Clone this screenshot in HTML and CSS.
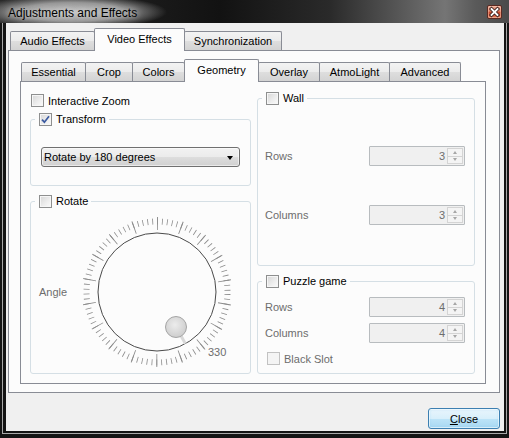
FILE: index.html
```html
<!DOCTYPE html>
<html>
<head>
<meta charset="utf-8">
<title>Adjustments and Effects</title>
<link rel="stylesheet" href="styles.css">
</head>
<body>
<div class="window">
  <div class="titlebar">
    <span class="title">Adjustments and Effects</span>
    <span class="close-x">
      <svg width="13" height="12" viewBox="0 0 13 12">
        <path d="M3.5 3 L9.5 9 M9.5 3 L3.5 9" stroke="#3a2320" stroke-width="3.6" stroke-linecap="square"/>
        <path d="M3.5 3 L9.5 9 M9.5 3 L3.5 9" stroke="#ffffff" stroke-width="1.8" stroke-linecap="square"/>
      </svg>
    </span>
  </div>
  <div class="frame">
    <div class="client">
      <div class="tabbar outer-tabs">
        <div class="tab t-audio">Audio Effects</div>
        <div class="tab sel t-video">Video Effects</div>
        <div class="tab t-sync">Synchronization</div>
      </div>
      <div class="pane outer-pane">
        <div class="tabbar inner-tabs">
          <div class="tab t-ess">Essential</div>
          <div class="tab t-crop">Crop</div>
          <div class="tab t-colors">Colors</div>
          <div class="tab sel t-geo">Geometry</div>
          <div class="tab t-over">Overlay</div>
          <div class="tab t-atmo">AtmoLight</div>
          <div class="tab t-adv">Advanced</div>
        </div>
        <div class="pane inner-pane">
          <div class="col col-left">
            <div class="check-row zoom-row"><span class="cb"></span><span>Interactive Zoom</span></div>
            <fieldset class="group transform">
              <legend><span class="leg"><span class="cb checked"><svg width="9" height="9" viewBox="0 0 9 9"><path d="M1 4.6 L3.4 7.2 L8 1.2" fill="none" stroke="#3b5aa0" stroke-width="1.7"/></svg></span><span>Transform</span></span></legend>
              <div class="group-body transform-body">
                <div class="combo"><span>Rotate by 180 degrees</span><span class="combo-arrow"></span></div>
              </div>
            </fieldset>
            <fieldset class="group rotate">
              <legend><span class="leg"><span class="cb"></span><span>Rotate</span></span></legend>
              <div class="group-body rotate-body">
                <span class="muted angle">Angle</span>
                <svg class="dial" width="160" height="160" viewBox="0 0 160 160">
                  <defs>
                    <radialGradient id="knob" cx="0.45" cy="0.4" r="0.65">
                      <stop offset="0" stop-color="#ececec"/>
                      <stop offset="1" stop-color="#cbcbcb"/>
                    </radialGradient>
                  </defs>
                  <circle cx="85" cy="80" r="70.5" fill="none" stroke="#8c8c8c" stroke-width="6" stroke-dasharray="0.8 4.12183" stroke-dashoffset="-2.061"/>
                  <circle cx="85" cy="80" r="68.5" fill="none" stroke="#8c8c8c" stroke-width="13" stroke-dasharray="0.9 23.011" stroke-dashoffset="-11.505"/>
                  <circle cx="85" cy="80" r="59" fill="none" stroke="#4a4a4a" stroke-width="1"/>
                  <line x1="109" y1="123.8" x2="113.3" y2="131.6" stroke="#d8d8d8" stroke-width="3"/>
                  <circle cx="104" cy="115" r="10.5" fill="url(#knob)" stroke="#a5a5a5" stroke-width="1"/>
                  <text x="136" y="144" class="dial-val">330</text>
                </svg>
              </div>
            </fieldset>
          </div>
          <div class="col col-right">
            <fieldset class="group wall">
              <legend><span class="leg"><span class="cb"></span><span>Wall</span></span></legend>
              <div class="group-body wall-body">
                <div class="field-row"><span class="muted">Rows</span><div class="spin"><span class="spin-val">3</span><span class="spin-btns"><span class="sb up"></span><span class="sb down"></span></span></div></div>
                <div class="field-row wall-cols"><span class="muted">Columns</span><div class="spin"><span class="spin-val">3</span><span class="spin-btns"><span class="sb up"></span><span class="sb down"></span></span></div></div>
              </div>
            </fieldset>
            <fieldset class="group puzzle">
              <legend><span class="leg"><span class="cb"></span><span>Puzzle game</span></span></legend>
              <div class="group-body puzzle-body">
                <div class="field-row"><span class="muted">Rows</span><div class="spin"><span class="spin-val">4</span><span class="spin-btns"><span class="sb up"></span><span class="sb down"></span></span></div></div>
                <div class="field-row puzzle-cols"><span class="muted">Columns</span><div class="spin"><span class="spin-val">4</span><span class="spin-btns"><span class="sb up"></span><span class="sb down"></span></span></div></div>
                <div class="check-row slot-row"><span class="cb disabled"></span><span class="muted">Black Slot</span></div>
              </div>
            </fieldset>
          </div>
        </div>
      </div>
      <div class="buttons">
        <button class="btn default"><u>C</u>lose</button>
      </div>
    </div>
  </div>
</div>
</body>
</html>
```
FILE: styles.css
```css
* { box-sizing: border-box; }
html, body { margin: 0; padding: 0; }
body {
  width: 509px; height: 438px; overflow: hidden;
  font-family: "Liberation Sans", Arial, sans-serif;
  font-size: 11px; color: #000; background: #151515;
}
.window {
  width: 509px; height: 438px;
  display: flex; flex-direction: column;
  background: #151515;
}
.titlebar {
  height: 23px; flex: none;
  display: flex; align-items: flex-start;
  background:
    radial-gradient(ellipse 95px 17px at 72px 12px, rgba(205,205,205,0.95) 0%, rgba(190,190,190,0.75) 55%, rgba(160,160,160,0) 100%),
    linear-gradient(to right, #2a2a2a 0, #1a1a1a 150px, #121212 220px, #2a2a2a 330px, #5e5e5e 410px, #757575 445px, #5a5a5a 475px, #4a4a4a 509px);
}
.title {
  font-size: 12px; line-height: 14px;
  margin: 6px 0 0 8px; color: #000;
  text-shadow: 0 0 6px rgba(235,235,235,0.9);
}
.close-x {
  margin: 5px 7px 0 auto;
  width: 15px; height: 14px;
  border: 1px solid #5b2a22;
  border-radius: 2px;
  background: linear-gradient(#eaa996 0%, #d9765a 45%, #c8462a 50%, #d2593a 80%, #e08a6c 100%);
  box-shadow: inset 0 0 0 1px rgba(255,210,190,0.45);
  display: flex; align-items: center; justify-content: center;
}
.frame {
  flex: 1; display: flex;
  margin: 0 2px 4px 2px;
  border: 1px solid #a9a9a9; border-top: 0;
  padding: 0 2px 2px 3px;
  background: #141414;
}
.client {
  flex: 1; display: flex; flex-direction: column;
  background: #f0f0f0;
}
.tabbar {
  display: flex; align-items: flex-end; flex: none;
  position: relative; z-index: 1;
  height: 22px;
}
.outer-tabs { margin: 5px 0 0 4px; }
.inner-tabs { margin: 0 0 0 1px; }
.tab {
  height: 19px;
  border: 1px solid #898c95; border-bottom: 0;
  border-radius: 2px 2px 0 0;
  background: linear-gradient(#f3f3f3 0%, #ebebeb 50%, #dedede 51%, #d3d3d3 100%);
  display: flex; align-items: center; justify-content: center;
  white-space: nowrap; flex: none;
}
.tab + .tab { margin-left: -1px; }
.tab.sel {
  height: 23px; margin-bottom: -1px;
  background: #fcfcfc;
  padding-bottom: 3px;
  position: relative; z-index: 2;
}
.t-audio { width: 85px; }
.t-video { width: 91px; }
.t-sync { width: 98px; }
.t-ess { width: 65px; }
.t-crop { width: 48px; }
.t-colors { width: 53px; }
.t-geo { width: 75px; }
.t-over { width: 62px; }
.t-atmo { width: 71px; }
.t-adv { width: 72px; }
.pane {
  border: 1px solid #898c95;
  background: #fcfcfc;
}
.outer-pane {
  flex: 1; margin: 0 4px 0 2px;
  padding: 8px 13px 8px 11px;
  display: flex; flex-direction: column;
}
.inner-pane {
  flex: 1;
  display: grid;
  grid-template-columns: 221px 218px;
  column-gap: 6px;
  padding: 10px 10px 9px 9px;
}
.col { display: flex; flex-direction: column; }
.col-left { padding-top: 2px; }
.check-row { display: flex; align-items: center; gap: 4px; height: 13px; }
.zoom-row { padding-left: 1px; }
.cb {
  width: 13px; height: 13px; flex: none;
  border: 1px solid #8e8f8f;
  background: linear-gradient(135deg, #d6d6d6 0%, #eeeeee 60%, #fbfbfb 100%);
  box-shadow: inset 0 0 0 1px #f6f6f6;
  display: flex; align-items: center; justify-content: center;
}
.cb.disabled {
  border-color: #c2c2c2;
  background: #f4f4f4;
  box-shadow: none;
}
.muted { color: #6d6d6d; }
.group {
  margin: 0; padding: 0; min-width: 0;
  border: 1px solid #d5dfe5;
  border-radius: 3px;
}
.group legend {
  margin-left: 4px;
  padding: 0 3px 0 4px;
  height: 13px; line-height: 13px;
}
.leg { display: flex; align-items: center; gap: 4px; height: 13px; }
.transform { margin-top: 6px; }
.transform-body { padding: 21px 10px 18px 10px; }
.combo {
  height: 20px;
  border: 1px solid #707070; border-radius: 3px;
  background: linear-gradient(#f2f2f2 0%, #ebebeb 50%, #dddddd 51%, #d0d0d0 100%);
  box-shadow: inset 0 0 0 1px rgba(255,255,255,0.55);
  display: flex; align-items: center; justify-content: space-between;
  padding: 0 6px 0 2px;
}
.combo-arrow {
  width: 0; height: 0;
  border-left: 3.5px solid transparent;
  border-right: 3.5px solid transparent;
  border-top: 4px solid #000;
  margin-top: 1px;
}
.rotate { margin-top: 9px; flex: 1; }
.rotate-body {
  padding: 4px 0 0 8px;
  display: flex; align-items: center;
}
.angle { width: 33px; flex: none; }
.dial { display: block; flex: none; }
.dial-val { font-family: "Liberation Sans", Arial, sans-serif; font-size: 11px; fill: #6d6d6d; }
.wall-body { padding: 41px 9px 40px 7px; }
.wall-cols { margin-top: 39px; }
.puzzle { margin-top: 9px; flex: 1; }
.puzzle-body { padding: 9px 9px 0 7px; }
.puzzle-cols { margin-top: 6px; }
.slot-row { margin-top: 9px; padding-left: 2px; }
.field-row {
  display: flex; align-items: center; justify-content: space-between;
  height: 20px;
}
.spin {
  width: 96px; height: 20px;
  border: 1px solid #b8bcbf; border-radius: 1px;
  background: #f0f0f0;
  display: flex; align-items: center; justify-content: flex-end;
}
.spin-val { color: #6d6d6d; margin-right: 2px; }
.spin-btns {
  display: flex; flex-direction: column;
  width: 16px; height: 16px; margin-right: 1px;
}
.sb {
  flex: 1; border: 1px solid #d4d4d4;
  background: #f4f4f4;
  display: flex; align-items: center; justify-content: center;
}
.sb + .sb { border-top: 0; }
.sb.up::before, .sb.down::before {
  content: ""; width: 0; height: 0;
  border-left: 2.5px solid transparent;
  border-right: 2.5px solid transparent;
}
.sb.up::before { border-bottom: 3px solid #a6a6a6; }
.sb.down::before { border-top: 3px solid #a6a6a6; }
.buttons {
  height: 38px; flex: none;
  display: flex; justify-content: flex-end; align-items: flex-start;
  padding: 15px 4px 0 0;
}
.btn {
  width: 72px; height: 21px;
  font-family: "Liberation Sans", Arial, sans-serif; font-size: 11px; color: #000;
  border: 1px solid #3c7fb1; border-radius: 3px;
  background: linear-gradient(#e9f5fc 0%, #d8effb 50%, #bde4f8 51%, #a8d8f2 100%);
  box-shadow: inset 0 0 0 1px rgba(255,255,255,0.6), inset 0 0 3px rgba(120,200,240,0.6);
  padding: 0; margin: 0;
}
.btn u { text-decoration: underline; }
```
